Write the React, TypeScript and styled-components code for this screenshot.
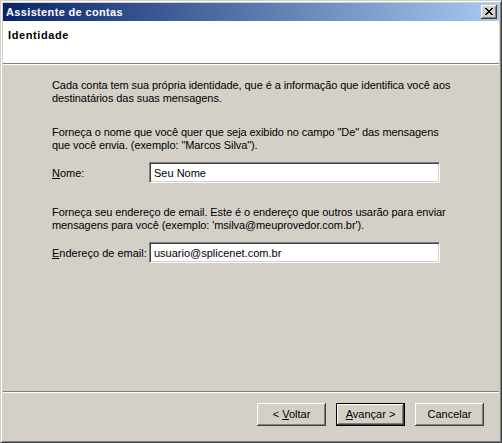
import { FC } from 'react'
import styled, { createGlobalStyle } from 'styled-components'

const GlobalStyle = createGlobalStyle`
  html, body {
    margin: 0;
    padding: 0;
    background: #d4d0c8;
  }
  body {
    font-family: "Liberation Sans", Arial, sans-serif;
    font-size: 11px;
    color: #000;
  }
`

const Window = styled.div`
  width: 502px;
  height: 443px;
  box-sizing: border-box;
  display: flex;
  flex-direction: column;
  padding: 2px;
  background: #d4d0c8;
  border: 1px solid;
  border-color: #d4d0c8 #404040 #404040 #d4d0c8;
  box-shadow: inset 1px 1px #fff, inset -1px -1px #808080;
`

const TitleBar = styled.div`
  height: 18px;
  display: flex;
  align-items: center;
  justify-content: space-between;
  padding: 0 2px 0 3px;
  background: linear-gradient(to right, #0a246a, #a6caf0);
`

const TitleText = styled.span`
  color: #fff;
  font-weight: bold;
  font-size: 11px;
  letter-spacing: 0.35px;
`

const CloseButton = styled.div`
  width: 16px;
  height: 14px;
  box-sizing: border-box;
  display: flex;
  align-items: center;
  justify-content: center;
  padding: 0 1px 1px 0;
  background: #d4d0c8;
  box-shadow: inset -1px -1px #404040, inset 1px 1px #fff, inset -2px -2px #808080;
`

const Header = styled.div`
  height: 42px;
  box-sizing: content-box;
  padding: 0 5px;
  background: #fff;
  border-bottom: 1px solid #808080;
  box-shadow: 0 1px #fff;
  margin-bottom: 1px;
`

const HeaderTitle = styled.div`
  padding-top: 8px;
  font-weight: bold;
  line-height: 13px;
  letter-spacing: 0.6px;
`

const Body = styled.div`
  flex: 1;
  padding: 14px 20px 0 49px;
  border-bottom: 1px solid #808080;
  box-shadow: 0 1px #fff;
  margin-bottom: 1px;
`

const Paragraph = styled.p`
  margin: 0;
  line-height: 13px;
  white-space: nowrap;
  letter-spacing: -0.08px;
`

const Section = styled.div<{ $gapAbove: number }>`
  margin-top: ${(p) => p.$gapAbove}px;
  display: flex;
  flex-direction: column;
  gap: 10px;
`

const FieldRow = styled.div`
  display: flex;
  align-items: center;
`

const Label = styled.label`
  width: 97px;
  flex-shrink: 0;
`

const TextInput = styled.input`
  width: 291px;
  height: 21px;
  box-sizing: border-box;
  margin: 0;
  padding: 0 4px;
  font-family: "Liberation Sans", Arial, sans-serif;
  font-size: 11px;
  color: #000;
  background: #fff;
  border: 1px solid;
  border-color: #808080 #fff #fff #808080;
  box-shadow: inset 1px 1px #404040, inset -1px -1px #d4d0c8;
  outline: none;
`

const Footer = styled.div`
  height: 47px;
  display: flex;
  justify-content: flex-end;
  align-items: flex-start;
  gap: 10px;
  padding: 10px 15px 0 0;
  box-sizing: border-box;
`

const Button = styled.button<{ $default?: boolean }>`
  width: 69px;
  height: 23px;
  box-sizing: border-box;
  margin: 0;
  padding: 0 0 1px;
  font-family: "Liberation Sans", Arial, sans-serif;
  font-size: 11px;
  color: #000;
  background: #d4d0c8;
  border: ${(p) => (p.$default ? '1px solid #000' : 'none')};
  box-shadow: inset -1px -1px #404040, inset 1px 1px #fff, inset -2px -2px #808080;
`

const CloseGlyph: FC = () => (
  <svg width="8" height="7" viewBox="0 0 8 7" shapeRendering="crispEdges">
    <path d="M0 0h2v1h-2zM6 0h2v1h-2zM1 1h2v1h-2zM5 1h2v1h-2zM2 2h4v1h-4zM3 3h2v1h-2zM2 4h4v1h-4zM1 5h2v1h-2zM5 5h2v1h-2zM0 6h2v1h-2zM6 6h2v1h-2z" fill="#000" />
  </svg>
)

const App: FC = () => {
  return (
    <>
      <GlobalStyle />
      <Window>
        <TitleBar>
          <TitleText>Assistente de contas</TitleText>
          <CloseButton>
            <CloseGlyph />
          </CloseButton>
        </TitleBar>
        <Header>
          <HeaderTitle>Identidade</HeaderTitle>
        </Header>
        <Body>
          <Paragraph>
            Cada conta tem sua própria identidade, que é a informação que identifica você aos
            <br />
            destinatários das suas mensagens.
          </Paragraph>
          <Section $gapAbove={21}>
            <Paragraph>
              Forneça o nome que você quer que seja exibido no campo "De" das mensagens
              <br />
              que você envia. (exemplo: "Marcos Silva").
            </Paragraph>
            <FieldRow>
              <Label htmlFor="nome"><u>N</u>ome:</Label>
              <TextInput id="nome" defaultValue="Seu Nome" />
            </FieldRow>
          </Section>
          <Section $gapAbove={23}>
            <Paragraph>
              Forneça seu endereço de email. Este é o endereço que outros usarão para enviar
              <br />
              mensagens para você (exemplo: 'msilva@meuprovedor.com.br').
            </Paragraph>
            <FieldRow>
              <Label htmlFor="email"><u>E</u>ndereço de email:</Label>
              <TextInput id="email" defaultValue="usuario@splicenet.com.br" />
            </FieldRow>
          </Section>
        </Body>
        <Footer>
          <Button>&lt; <u>V</u>oltar</Button>
          <Button $default><u>A</u>vançar &gt;</Button>
          <Button>Cancelar</Button>
        </Footer>
      </Window>
    </>
  )
}

export default App
